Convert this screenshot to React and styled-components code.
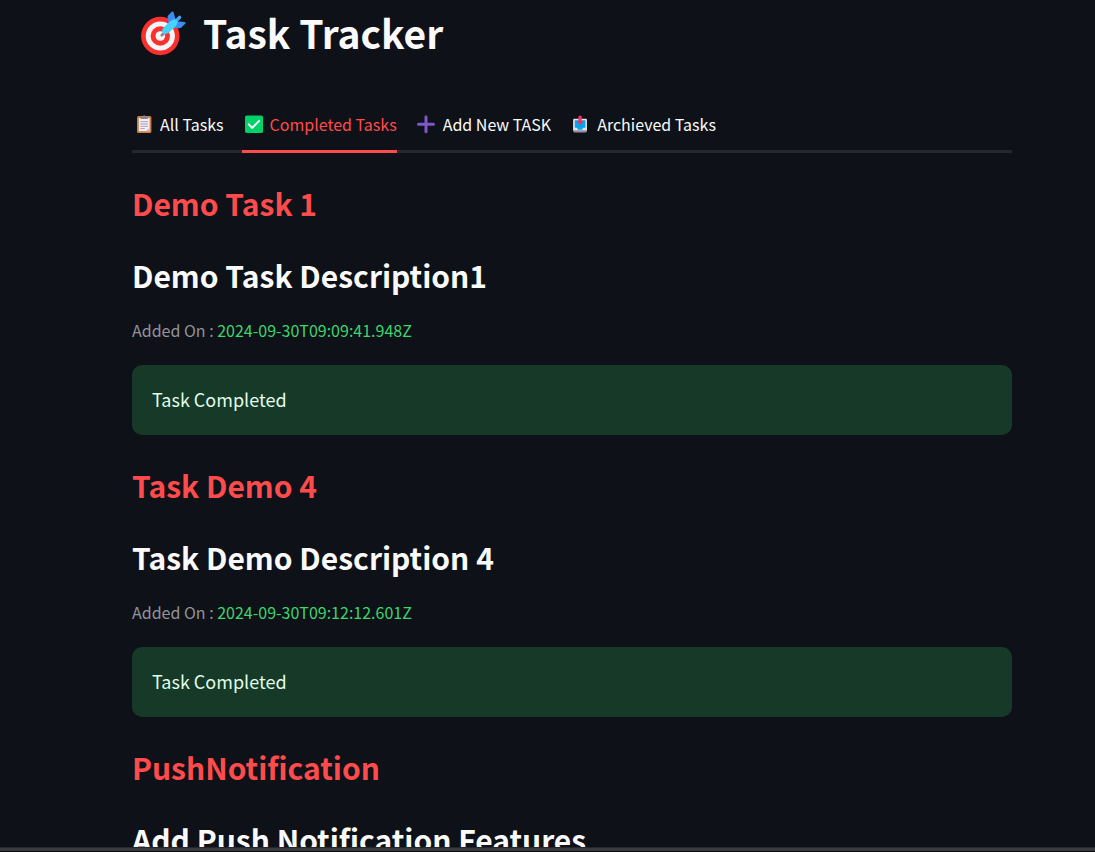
import React, { useState } from "react";
import styled, { createGlobalStyle } from "styled-components";

const GlobalStyle = createGlobalStyle`
  * { box-sizing: border-box; }
  body {
    margin: 0;
    background: #0e1117;
    color: #fafafa;
    font-family: "Noto Sans CJK SC", "Noto Sans", sans-serif;
  }
`;

const Page = styled.div`
  display: flex;
  flex-direction: column;
  height: 100vh;
`;

const Main = styled.main`
  flex: 1;
  min-height: 0;
  overflow: hidden;
  padding: 0 83px 0 132px;
`;

const BottomEdge = styled.footer`
  flex: none;
  height: 5px;
  background: #3a3a3c;
  border-top: 1px solid #27272b;
  border-bottom: 1px solid #08090c;
`;

const Title = styled.h1`
  display: flex;
  align-items: center;
  gap: 17px;
  margin: 0 0 36px;
  padding-left: 8px;
  height: 64px;
  font-size: 39px;
  font-weight: 700;
  line-height: 64px;
`;

const TabList = styled.div`
  display: flex;
  gap: 18px;
  border-bottom: 3px solid #262730;
`;

const Tab = styled.button`
  display: flex;
  align-items: center;
  gap: 4px;
  height: 53px;
  margin: 0 0 -3px;
  padding: 0 0 2px;
  border: 0;
  border-bottom: 3px solid ${(p) => (p.$active ? "#ff4b4b" : "transparent")};
  background: none;
  color: ${(p) => (p.$active ? "#ff4b4b" : "#fafafa")};
  font: inherit;
  font-size: 16px;
  line-height: 24px;
  white-space: nowrap;
  cursor: pointer;
`;

const TabIcon = styled.svg`
  flex: none;
  width: 24px;
  height: 24px;
`;

const Tasks = styled.div`
  padding-top: 20px;
`;

const Task = styled.article`
  display: flex;
  flex-direction: column;
  gap: 20px;
  margin-bottom: 20px;
`;

const Heading = styled.h2`
  margin: 0;
  padding: 9px 0 1px;
  color: ${(p) => (p.$accent ? "#ff4b4b" : "#fafafa")};
  font-size: 30px;
  font-weight: 700;
  line-height: 42px;
`;

const Caption = styled.p`
  margin: 0;
  padding-bottom: 2px;
  color: #929398;
  font-size: 16px;
  line-height: 26px;
`;

const Stamp = styled.time`
  color: #3dd56d;
`;

const Alert = styled.div`
  padding: 20px 20px 22px;
  border-radius: 10px;
  background: #173928;
  color: #dffde9;
  font-size: 18px;
  line-height: 28px;
`;

const TargetIcon = () => (
  <svg width="46" height="50" viewBox="0 -4 46 50" aria-hidden="true">
    <circle cx="20.3" cy="25" r="19.2" fill="#f8312f" />
    <circle cx="20.3" cy="25" r="14.6" fill="#f4f4f4" />
    <circle cx="20.3" cy="25" r="9.7" fill="#f8312f" />
    <circle cx="20.3" cy="25" r="4.8" fill="#f4f4f4" />
    <path d="M21.8 24.2 27 19" stroke="#8b8792" strokeWidth="2.8" strokeLinecap="round" />
    <path d="M28.8 12.5 27.6 6.6Q27.4 5.3 28.3 4.3L31.8.8Q33.1-.2 33.6 1.4L35.8 9 36.8 10.2 44.5 11.1Q46.2 11.5 45.2 12.8L41.4 16.4Q40.4 17.4 39 17.2L32.5 16.6Z" fill="#3d8cf2" />
    <path d="M35 11 39.6 6.4" stroke="#46a4fb" strokeWidth="3.4" strokeLinecap="round" />
    <path d="M22 20.2Q21.8 18.4 23.4 16.8L29.6 10.8Q34.2 6.8 36.6 9.2 39 11.8 35 16L28.8 21.6Q27 23.1 25 23 22.4 22.6 22 20.2Z" fill="#46d2fa" />
  </svg>
);

const ClipboardIcon = () => (
  <TabIcon viewBox="0 0 24 24" aria-hidden="true">
    <rect x="5" y="4" width="14.4" height="17" rx="1.6" fill="#c98040" />
    <path d="M6.8 6h10.8v13.2H6.8z" fill="#f3eef8" />
    <path d="M14 19.2 17.6 15.5v3.7z" fill="#c3bacd" />
    <path d="M8.4 9.7H16M8.4 12H16M8.4 14.3H16M8.4 16.6h4.4" stroke="#aaa2b3" strokeWidth="1" />
    <path d="M8.5 7V5.5q0-.8.8-.8h1.3q.2-1.5 1.6-1.5t1.6 1.5h1.3q.8 0 .8.8V7z" fill="#88818f" />
  </TabIcon>
);

const CheckIcon = () => (
  <TabIcon viewBox="0 0 24 24" aria-hidden="true">
    <rect x="3" y="3.5" width="18" height="17.5" rx="1.7" fill="#00d26a" />
    <path d="m6.8 12.4 3.4 3.5 6.9-7" fill="none" stroke="#fff" strokeWidth="2" strokeLinecap="round" strokeLinejoin="round" />
  </TabIcon>
);

const PlusIcon = () => (
  <TabIcon viewBox="0 0 24 24" aria-hidden="true">
    <path d="M11 4.8v15M3.5 12.3h15" stroke="#7e57c8" strokeWidth="3" strokeLinecap="round" />
  </TabIcon>
);

const OutboxIcon = () => (
  <TabIcon viewBox="0 0 24 24" aria-hidden="true">
    <path d="M4.6 8h13l.4 7.5v3.3q0 1.6-1.6 1.6H5.7q-1.6 0-1.6-1.6v-3.3z" fill="#998ea1" />
    <path d="M5.2 6.8h11.8q.9 0 .9 1v10.4H4.2V7.8q0-1 1-1z" fill="#e6e6e9" />
    <path d="M5.8 8.2h10.6v7.6h-2.2l-1.1 1.9H9.1L8 15.8H5.8z" fill="#00a6ed" />
    <path d="M9.5 4.3q0-.6.6-.6h2q.6 0 .6.6v4.8h1.1q.7 0 .2.6l-2.4 2.5q-.5.5-1 0L8.2 9.7q-.5-.6.2-.6h1.1z" fill="#f92f60" />
  </TabIcon>
);

const TABS = [
  { label: "All Tasks", Icon: ClipboardIcon },
  { label: "Completed Tasks", Icon: CheckIcon },
  { label: "Add New TASK", Icon: PlusIcon },
  { label: "Archieved Tasks", Icon: OutboxIcon },
];

const TASKS = [
  { name: "Demo Task 1", description: "Demo Task Description1", added: "2024-09-30T09:09:41.948Z" },
  { name: "Task Demo 4", description: "Task Demo Description 4", added: "2024-09-30T09:12:12.601Z" },
  { name: "PushNotification", description: "Add Push Notification Features" },
];

export default function App() {
  const [active, setActive] = useState(1);
  return (
    <Page>
      <GlobalStyle />
      <Main>
        <Title>
          <TargetIcon />
          Task Tracker
        </Title>
        <TabList role="tablist">
          {TABS.map(({ label, Icon }, i) => (
            <Tab
              key={label}
              type="button"
              role="tab"
              aria-selected={i === active}
              $active={i === active}
              onClick={() => setActive(i)}
            >
              <Icon />
              {label}
            </Tab>
          ))}
        </TabList>
        <Tasks role="tabpanel">
          {TASKS.map((task) => (
            <Task key={task.name}>
              <Heading $accent>{task.name}</Heading>
              <Heading as="h3">{task.description}</Heading>
              {task.added && (
                <>
                  <Caption>
                    Added On : <Stamp dateTime={task.added}>{task.added}</Stamp>
                  </Caption>
                  <Alert>Task Completed</Alert>
                </>
              )}
            </Task>
          ))}
        </Tasks>
      </Main>
      <BottomEdge />
    </Page>
  );
}
